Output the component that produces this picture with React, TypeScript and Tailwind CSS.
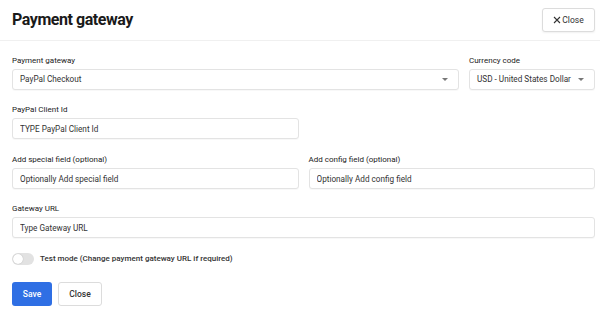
import React, { useState } from 'react';

function Field({ label, placeholder }: { label: string; placeholder: string }) {
  return (
    <div className="flex flex-col">
      <label className="mb-[2px] whitespace-nowrap text-[8px] leading-[12px] font-normal text-[#222]">{label}</label>
      <input
        type="text"
        placeholder={placeholder}
        className="h-[21px] w-full rounded-[3px] border border-[#e3e3e3] bg-white px-[7px] text-[8.2px] text-[#333] placeholder:text-[#333] shadow-[0_1px_1px_rgba(0,0,0,0.03)] outline-none"
      />
    </div>
  );
}

function SelectField({ label, value }: { label: string; value: string }) {
  return (
    <div className="flex flex-col">
      <label className="mb-[2px] whitespace-nowrap text-[8px] leading-[12px] font-normal text-[#222]">{label}</label>
      <div className="flex h-[21px] w-full items-center justify-between rounded-[3px] border border-[#e3e3e3] bg-white pl-[7px] pr-[10px] text-[8.2px] text-[#333] shadow-[0_1px_1px_rgba(0,0,0,0.03)]">
        <span className="whitespace-nowrap">{value}</span>
        <span className="h-0 w-0 border-x-[3px] border-t-[3.5px] border-x-transparent border-t-[#777]" />
      </div>
    </div>
  );
}

export default function App() {
  const [testMode, setTestMode] = useState(false);

  return (
    <div className="h-[313px] w-[600px] bg-white font-['Roboto',sans-serif] text-[#222]">
      {/* Header */}
      <div className="flex h-[41px] items-center justify-between border-b border-[#f0f0f0] pl-[12px] pr-[5px]">
        <h1 className="text-[16px] font-bold tracking-[-0.45px] text-[#1a1a1a]">Payment gateway</h1>
        <button className="flex h-[24px] w-[53px] items-center justify-center gap-[1px] rounded-[3px] border border-[#dcdcdc] bg-white text-[8.5px] text-[#333] shadow-[0_1px_2px_rgba(0,0,0,0.06)]">
          <svg width="8" height="8" viewBox="0 0 8 8" fill="none" stroke="#333" strokeWidth="1.1">
            <path d="M1 1L7 7M7 1L1 7" />
          </svg>
          Close
        </button>
      </div>

      {/* Form */}
      <div className="flex flex-col gap-[14px] pl-[12px] pr-[5px] pt-[14px]">
        <div className="grid grid-cols-[447px_1fr] gap-[10px]">
          <SelectField label="Payment gateway" value="PayPal Checkout" />
          <SelectField label="Currency code" value="USD - United States Dollar" />
        </div>

        <div className="grid grid-cols-2 gap-[10px]">
          <Field label="PayPal Client Id" placeholder="TYPE PayPal Client Id" />
        </div>

        <div className="mt-[1px] grid grid-cols-2 gap-[10px]">
          <Field label="Add special field (optional)" placeholder="Optionally Add special field" />
          <Field label="Add config field (optional)" placeholder="Optionally Add config field" />
        </div>

        <Field label="Gateway URL" placeholder="Type Gateway URL" />

        <div className="mt-[1px] flex items-center gap-[6px]">
          <button
            onClick={() => setTestMode(!testMode)}
            className={`relative h-[12px] w-[22px] rounded-full ${testMode ? 'bg-[#2f6fe4]' : 'bg-[#e2e2e2]'}`}
          >
            <span
              className={`absolute top-[1px] h-[10px] w-[10px] rounded-full bg-white shadow-[0_0_1px_rgba(0,0,0,0.3)] ${testMode ? 'left-[11px]' : 'left-[1px]'}`}
            />
          </button>
          <span className="text-[8px] font-medium text-[#333]">Test mode (Change payment gateway URL if required)</span>
        </div>

        <div className="mt-[3px] flex gap-[6px]">
          <button className="h-[24px] w-[40px] rounded-[3px] bg-[#2f6fe4] text-[8.5px] font-medium text-white">Save</button>
          <button className="h-[24px] w-[44px] rounded-[3px] border border-[#dcdcdc] bg-white text-[8.5px] font-medium text-[#333]">Close</button>
        </div>
      </div>
    </div>
  );
}
